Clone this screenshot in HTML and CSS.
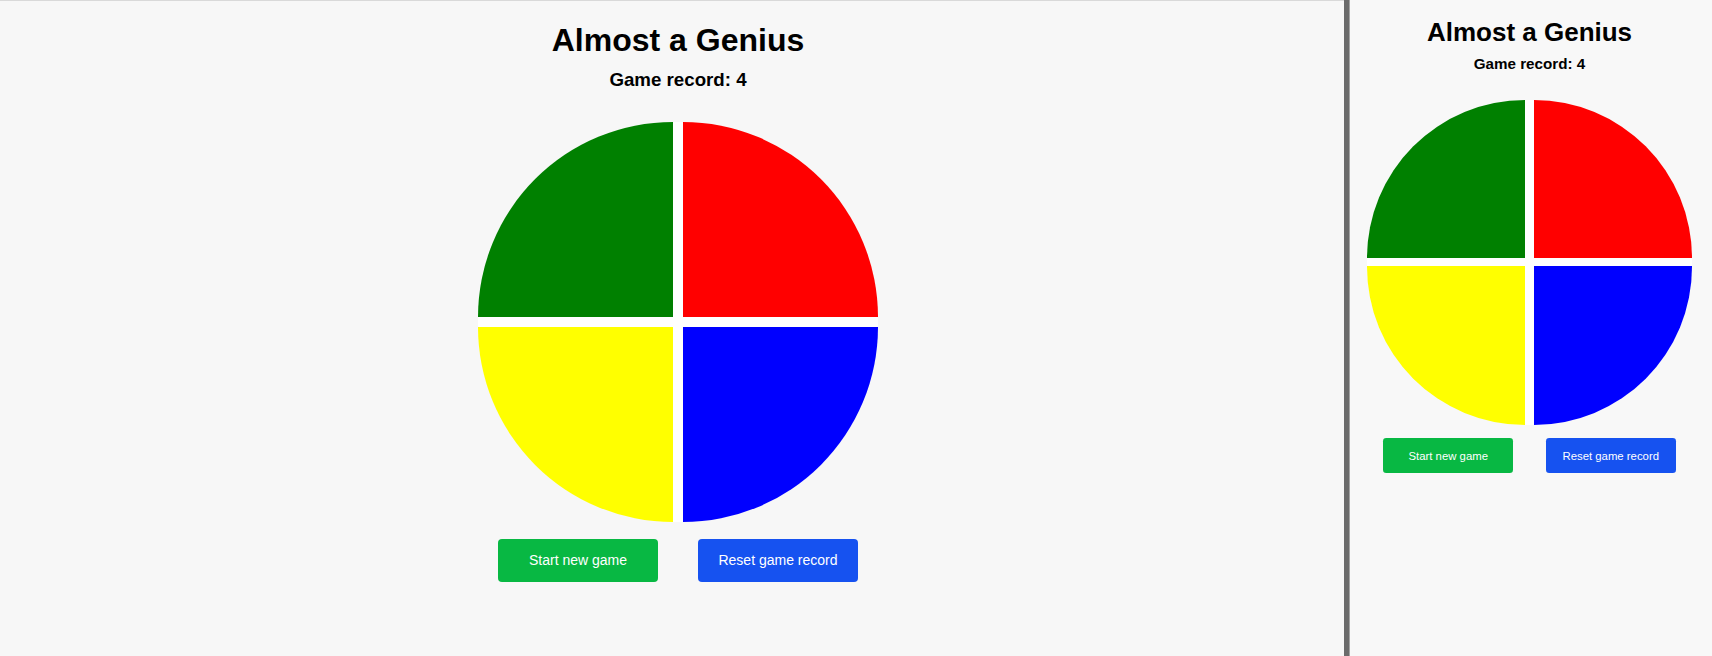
FILE: index.html
```html
<!DOCTYPE html>
<html lang="en">
<head>
<meta charset="utf-8">
<title>Almost a Genius</title>
<link rel="stylesheet" href="styles.css">
</head>
<body>
<div class="workspace">
  <section class="pane pane-main">
    <div class="game">
      <h1 class="title">Almost a Genius</h1>
      <h3 class="record">Game record: 4</h3>
      <div class="board">
        <div class="pad pad-green"></div>
        <div class="pad pad-red"></div>
        <div class="pad pad-yellow"></div>
        <div class="pad pad-blue"></div>
      </div>
      <div class="controls">
        <button class="btn btn-start">Start new game</button>
        <button class="btn btn-reset">Reset game record</button>
      </div>
    </div>
  </section>
  <div class="divider"></div>
  <section class="pane pane-preview">
    <div class="game game-small">
      <h1 class="title">Almost a Genius</h1>
      <h3 class="record">Game record: 4</h3>
      <div class="board">
        <div class="pad pad-green"></div>
        <div class="pad pad-red"></div>
        <div class="pad pad-yellow"></div>
        <div class="pad pad-blue"></div>
      </div>
      <div class="controls">
        <button class="btn btn-start">Start new game</button>
        <button class="btn btn-reset">Reset game record</button>
      </div>
    </div>
  </section>
</div>
</body>
</html>
```

FILE: styles.css
```css
html, body {
  margin: 0;
  padding: 0;
  background: #f7f7f7;
  font-family: "Liberation Sans", Arial, sans-serif;
  color: #000;
}

.workspace {
  display: flex;
  width: 1712px;
  height: 656px;
  overflow: hidden;
}

.pane {
  box-sizing: border-box;
  height: 100%;
  background: #f7f7f7;
}

.pane-main {
  width: 1344px;
  flex: none;
  border-top: 1px solid #d9d9d9;
  padding-left: 12px;
}

.divider {
  flex: none;
  width: 5px;
  height: 100%;
  background: #6b6b6b;
  border-right: 1px solid #a3a3a3;
}

.pane-preview {
  flex: 1;
  padding-right: 3px;
  background: #f8f8f8;
}

.game {
  display: flex;
  flex-direction: column;
  align-items: center;
}

.game-small {
  zoom: 0.8125;
}

.title {
  margin: 21px 0 10px;
  font-size: 32px;
  line-height: 37px;
  font-weight: bold;
}

.record {
  margin: 0;
  font-size: 18.72px;
  line-height: 21.5px;
  font-weight: bold;
}

.board {
  margin-top: 31px;
  width: 400px;
  height: 400px;
  display: grid;
  grid-template-columns: 195px 195px;
  grid-template-rows: 195px 195px;
  gap: 10px;
  background: #ffffff;
  border-radius: 50%;
}

.game-small .board {
  margin-top: 33px;
}

.pad-green {
  background: #008000;
  border-top-left-radius: 100%;
}

.pad-red {
  background: #ff0000;
  border-top-right-radius: 100%;
}

.pad-yellow {
  background: #ffff00;
  border-bottom-left-radius: 100%;
}

.pad-blue {
  background: #0000ff;
  border-bottom-right-radius: 100%;
}

.controls {
  display: flex;
  gap: 40px;
  margin-top: 17px;
}

.btn {
  width: 160px;
  height: 43px;
  border: none;
  border-radius: 4px;
  color: #ffffff;
  font-family: "Liberation Sans", Arial, sans-serif;
  font-size: 14px;
  padding: 0;
  cursor: pointer;
}

.btn-start {
  background: #08b843;
}

.btn-reset {
  background: #1652f0;
}
```
